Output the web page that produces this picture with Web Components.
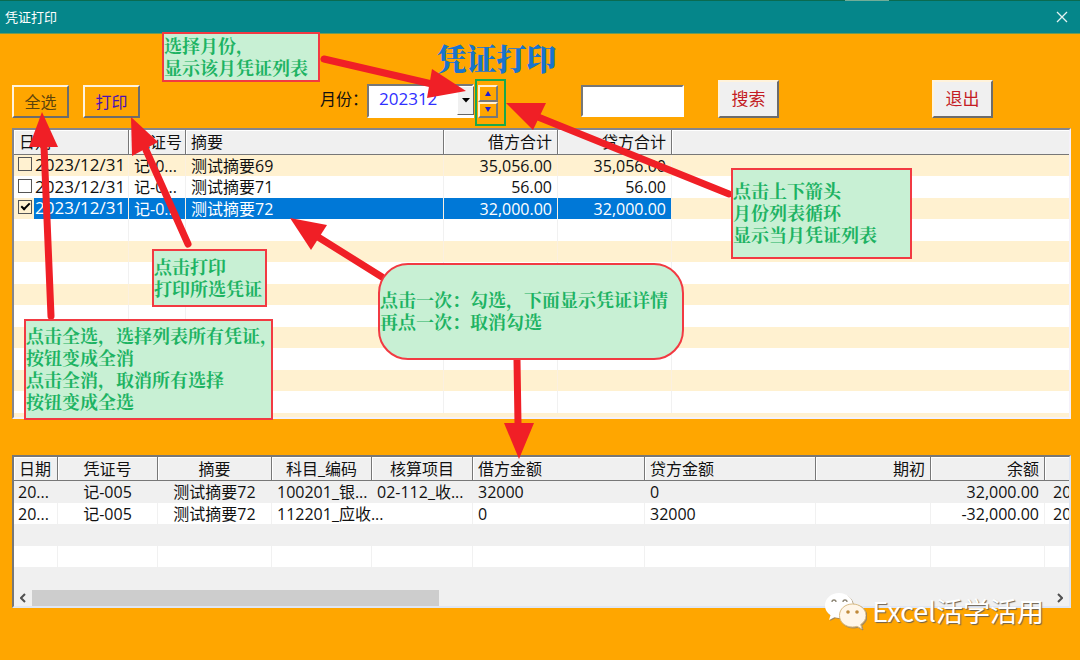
<!DOCTYPE html>
<html lang="zh-CN">
<head>
<meta charset="utf-8">
<title>凭证打印</title>
<style>
  html { min-height: 100%; background: #ffa600; }
  body { margin: 0; font: 16px/20px "Open Sans", "Noto Sans CJK SC", sans-serif; color: #111; }
</style>
</head>
<body>
<voucher-form></voucher-form>
<script>
const make = (host, html) => { host.attachShadow({ mode: "open" }).innerHTML = html; };

/* Window caption with the close button */
customElements.define("title-bar", class extends HTMLElement {
  connectedCallback() {
    make(this, `<style>
      :host { display: flex; align-items: center; justify-content: space-between; box-sizing: border-box; height: 34px;
        padding: 0 10px 0 5px; background: #05868a; border-top: 1px solid #0a6b50; border-bottom: 1px solid #6f9a54;
        color: #fff; font-size: 13px; position: relative; }
      i { position: absolute; top: -1px; right: 191px; width: 44px; height: 1px; background: #72ad98; }
      button { border: 0; padding: 0; background: none; width: 16px; height: 16px; }
      svg { display: block; }
    </style>
    <i></i><slot></slot>
    <button aria-label="关闭"><svg width="16" height="16" viewBox="0 0 16 16"><path d="M3 3L13 13M13 3L3 13" stroke="#e4f2f2" stroke-width="1.3"/></svg></button>`);
  }
});

/* Raised push button */
customElements.define("form-button", class extends HTMLElement {
  connectedCallback() {
    make(this, `<style>
      :host { display: block; flex: none; width: 57px; height: 33px; --face: #ffa600; }
      :host([large]) { width: 61px; height: 38px; --face: #f0f0f0; font-size: 17px; }
      button { display: block; box-sizing: border-box; width: 100%; height: 100%; padding: 0; font: inherit; color: inherit;
        background: var(--face); border: 2px solid; border-color: #fff3dc #6c6c6c #6c6c6c #fff3dc; }
    </style><button><slot></slot></button>`);
  }
});

/* Month drop-down */
customElements.define("month-select", class extends HTMLElement {
  connectedCallback() {
    make(this, `<style>
      :host { display: flex; align-items: flex-end; }
      label { height: 38px; line-height: 38px; width: 47px; white-space: nowrap; }
      .box { display: grid; }
      select, .drop { grid-area: 1 / 1; }
      select { appearance: none; box-sizing: border-box; width: 107px; height: 34px; margin: 0; padding: 0 0 4px 10px; border: 2px solid;
        border-color: #777 #fff #fff #777; border-radius: 0; background: #fff; color: #2f2fff; font: inherit; font-size: 17px; }
      .drop { justify-self: end; display: grid; place-items: center; box-sizing: border-box; width: 17px; height: 29px; margin: 2px 0 0;
        background: #f0f0f0; border: 1px solid; border-color: #fff #666 #666 #fff; pointer-events: none; }
    </style>
    <label for="m">月份：</label>
    <div class="box"><select id="m"><option>202312</option></select>
    <span class="drop"><svg width="8" height="5" viewBox="0 0 8 5"><path d="M0 0H8L4 4.5Z" fill="#000"/></svg></span></div>`);
  }
});

/* Up and down stepper */
customElements.define("month-spin", class extends HTMLElement {
  connectedCallback() {
    make(this, `<style>
      :host { display: grid; grid-template-rows: 1fr 1fr; width: 20px; height: 33px; position: relative; }
      :host::after { content: ""; position: absolute; inset: -6px -8px -8px -3px; border: 2px solid #19a84c; pointer-events: none; }
      button { display: grid; place-items: center; padding: 0; background: #ffa600; border: 2px solid; border-color: #fff0d0 #777 #777 #fff0d0; }
    </style>
    <button aria-label="上一月"><svg width="6" height="5"><path d="M0 5H6L3 0Z" fill="#1c1cd8"/></svg></button>
    <button aria-label="下一月"><svg width="6" height="5"><path d="M0 0H6L3 5Z" fill="#1c1cd8"/></svg></button>`);
  }
});

customElements.define("search-box", class extends HTMLElement {
  connectedCallback() {
    make(this, `<style>
      :host { display: block; width: 103px; height: 33px; }
      input { display: block; box-sizing: border-box; width: 100%; height: 32px; margin: 0; padding: 0 4px; font: inherit;
        border: 2px solid; border-color: #777 #fff #fff #777; background: #fff; border-radius: 0; }
    </style><input type="text" aria-label="搜索内容">`);
  }
});

/* Shared look of the two list views */
const listStyle = `
  :host { display: block; overflow: hidden; border: 2px solid; border-color: #85858c #f4f1fb #f4f1fb #85858c; background: #fff; }
  table { border-collapse: separate; border-spacing: 0; table-layout: fixed; width: 100%; line-height: 20px; }
  th { height: 24px; box-sizing: border-box; padding: 0 5px; font-weight: 400; text-align: left; background: #f0f0f0;
    border-right: 1px solid #777; border-bottom: 1px solid #777; box-shadow: inset 1px 1px #fff; white-space: nowrap; overflow: hidden; }
  th:last-child { border-right: 0; }
  td { box-sizing: border-box; height: 21px; padding: 0 5px; border-right: 1px solid #f1f1f1; white-space: nowrap; overflow: hidden; }
  td:last-child { border-right: 0; }
  tr:nth-child(odd) td { background: var(--stripe); border-right-color: var(--stripe-line, var(--stripe)); }
  .r { text-align: right; } .c { text-align: center; }`;

customElements.define("voucher-list", class extends HTMLElement {
  connectedCallback() {
    const data = [["2023/12/31", "记-0...", "测试摘要69", "35,056.00"], ["2023/12/31", "记-0...", "测试摘要71", "56.00"], ["2023/12/31", "记-0...", "测试摘要72", "32,000.00"]];
    const rows = data.map((d, i) => `<tr${i === 2 ? ' class="sel"' : ""}><td class="first"><label><input type="checkbox"${i === 2 ? " checked" : ""}><span>${d[0]}</span></label></td><td>${d[1]}</td><td>${d[2]}</td><td class="r">${d[3]}</td><td class="r">${d[3]}</td><td></td></tr>`);
    const empty = "<tr><td></td><td></td><td></td><td></td><td></td><td></td></tr>".repeat(9);
    make(this, `<style>${listStyle}
      :host { --stripe: #fff1d0; --stripe-line: #fbf0e0; }
      th { height: 25px; }
      tr:nth-child(even) td { height: 22px; }
      tbody tr:last-child td { height: 4px; }
      td.first { padding: 0; }
      label { display: flex; height: 21px; }
      input { appearance: none; flex: none; box-sizing: border-box; width: 14px; height: 14px; margin: 2px 2px 0 4px; border: 1px solid #555; display: grid; place-items: center; }
      input:checked::after { content: ""; box-sizing: border-box; width: 9px; height: 5px; border: solid #000; border-width: 0 0 2px 2px; transform: rotate(-45deg); margin-bottom: 3px; }
      span { flex: 1; padding-left: 1px; font-size: 17px; }
      tr.sel span, tr.sel td:not(.first):not(:last-child) { background: #0078d7; color: #fff; }
    </style>
    <table><colgroup><col style="width:115px"><col style="width:57px"><col style="width:258px"><col style="width:114px"><col style="width:114px"><col></colgroup>
    <thead><tr><th>日期</th><th class="c">凭证号</th><th>摘要</th><th class="r">借方合计</th><th class="r">贷方合计</th><th></th></tr></thead>
    <tbody>${rows.join("")}${empty}<tr><td colspan="6"></td></tr></tbody></table>`);
  }
});

customElements.define("detail-list", class extends HTMLElement {
  connectedCallback() {
    const widths = [44, 100, 114, 100, 101, 172, 171, 115, 114].map(w => `<col style="width:${w}px">`).join("") + "<col>";
    const empty = ("<tr>" + "<td></td>".repeat(10) + "</tr>").repeat(3);
    make(this, `<style>${listStyle}
      :host { --stripe: #f0f0f0; border-color: #777 #dfe6f4 #dfe6f4 #777; }
      tbody tr:nth-child(odd) td { height: 22px; }
      td:first-child { padding: 0 4px; }
      td:last-child { padding-left: 8px; text-overflow: clip; }
      .bar { display: flex; align-items: center; height: 17px; background: #f0f0f0; }
      .bar button { flex: none; width: 18px; height: 17px; padding: 0; border: 0; background: none; display: grid; place-items: center; }
      .track { flex: 1; height: 16px; margin-right: 2px; }
      .thumb { width: 40%; height: 16px; background: #cdcdcd; }
    </style>
    <table><colgroup>${widths}</colgroup>
    <thead><tr><th>日期</th><th class="c">凭证号</th><th class="c">摘要</th><th class="c">科目_编码</th><th class="c">核算项目</th><th>借方金额</th><th>贷方金额</th><th class="r">期初</th><th class="r">余额</th><th></th></tr></thead>
    <tbody>
      <tr><td>20...</td><td class="c">记-005</td><td class="c">测试摘要72</td><td>100201_银...</td><td>02-112_收...</td><td>32000</td><td>0</td><td></td><td class="r">32,000.00</td><td>20</td></tr>
      <tr><td>20...</td><td class="c">记-005</td><td class="c">测试摘要72</td><td colspan="2">112201_应收...</td><td>0</td><td>32000</td><td></td><td class="r">-32,000.00</td><td>20</td></tr>
      ${empty}
    </tbody></table>
    <div class="bar">
      <button aria-label="向左滚动"><svg width="6" height="10"><path d="M5 1L1 5L5 9" fill="none" stroke="#505050" stroke-width="2"/></svg></button>
      <div class="track"><div class="thumb"></div></div>
      <button aria-label="向右滚动"><svg width="6" height="10"><path d="M1 1L5 5L1 9" fill="none" stroke="#505050" stroke-width="2"/></svg></button>
    </div>`);
  }
});

/* Callout box; its place on the overlay comes from the overlay's stylesheet */
customElements.define("note-box", class extends HTMLElement {
  connectedCallback() {
    make(this, `<style>
      :host { display: flex; align-items: center; box-sizing: border-box; padding-bottom: 3px; border: 2px solid #f23a42; background: #c8f0d4;
        color: #1db363; font: 700 18px/22px "Noto Serif CJK SC", "Noto Sans CJK SC", serif; white-space: nowrap; }
      :host([round]) { border-radius: 30px; }
    </style><div><slot></slot></div>`);
  }
});

/* Free canvas of callouts and arrows laid over the form */
customElements.define("note-layer", class extends HTMLElement {
  connectedCallback() {
    make(this, `<style>
      :host { position: absolute; inset: 0; overflow: hidden; pointer-events: none; }
      svg { position: absolute; inset: 0; width: 100%; height: 100%; }
      note-box { position: absolute; }
      .month { left: 162px; top: 32px; width: 158px; height: 50px; }
      .spin { left: 731px; top: 168px; width: 181px; height: 91px; }
      .print { left: 152px; top: 249px; width: 115px; height: 58px; }
      .all { left: 24px; top: 319px; width: 249px; height: 101px; }
      .pick { left: 378px; top: 263px; width: 306px; height: 97px; }
    </style>
    <svg><g stroke="#f01f26" stroke-width="7" stroke-linecap="round">
      <path d="M324 59L432 84M188 244L146 150M51 316L44 146M729 194L538 117M382 277L318 237M517 360L518 424"/></g>
      <g fill="#f01f26"><path d="M466 91L432 69L427 98Z"/><path d="M131 117L158 142L132 156Z"/><path d="M42 112L58 147L29 147Z"/>
      <path d="M506 103L546 103L533 130Z"/><path d="M290 218L327 225L311 250Z"/><path d="M519 459L504 423L534 423Z"/></g></svg>
    <note-box class="month">选择月份，<br>显示该月凭证列表</note-box>
    <note-box class="spin">点击上下箭头<br>月份列表循环<br>显示当月凭证列表</note-box>
    <note-box class="print">点击打印<br>打印所选凭证</note-box>
    <note-box class="all">点击全选，选择列表所有凭证，<br>按钮变成全消<br>点击全消，取消所有选择<br>按钮变成全选</note-box>
    <note-box class="pick" round>点击一次：勾选，下面显示凭证详情<br>再点一次：取消勾选</note-box>`);
  }
});

customElements.define("account-mark", class extends HTMLElement {
  connectedCallback() {
    make(this, `<style>
      :host { position: absolute; right: 36px; top: 590px; display: flex; align-items: center; gap: 6px; height: 42px;
        color: #fff; font: 27px/42px "Noto Sans CJK SC", sans-serif; text-shadow: 1px 1px 1px #6b6050; white-space: nowrap; }
      svg { filter: drop-shadow(1px 1px 0 #a08860); }
    </style>
    <svg width="42" height="40" viewBox="0 0 42 40">
      <path d="M15 2C7 2 1 7.500 1 14.500C1 18.500 3 22 6.500 24.300L5 29L10.500 26.300C12 26.700 13.500 27 15 27C23 27 29 21.500 29 14.500S23 2 15 2Z" fill="#fff"/>
      <path d="M28.500 13C21 13 15.500 18 15.500 24.500S21 36 28.500 36C30 36 31.500 35.800 33 35.300L38 38L36.700 33.500C40 31.300 42 28.200 42 24.500C42 18 36 13 28.500 13Z" fill="#fff6e8" stroke="#d8bb84" stroke-width="1"/>
      <g fill="none" stroke="#8c8574" stroke-width="1.300"><path d="M8 11A2 2 0 0 1 12 11M19 11A2 2 0 0 1 23 11"/></g>
      <g fill="#c08a3a"><circle cx="24" cy="21" r="1.800"/><circle cx="33" cy="21" r="1.800"/></g>
    </svg><slot></slot>`);
  }
});

customElements.define("voucher-form", class extends HTMLElement {
  connectedCallback() {
    make(this, `<style>
      :host { display: block; position: relative; min-height: 100vh; background: #ffa600; }
      main { padding: 0 9px 0 12px; }
      h1 { margin: 0; height: 46px; padding-right: 90px; font: 900 30px/46px "Noto Serif CJK SC", "Noto Sans CJK SC", serif; color: #1874cd; text-align: center; }
      .tools { display: flex; align-items: flex-end; }
      .print { margin-left: 14px; color: #4b10b4; } .all { color: #5c430c; }
      month-select { margin-left: 180px; } month-spin { margin-left: 4px; }
      search-box { margin-left: 83px; } .find { margin-left: 34px; } .quit { margin: 0 78px 0 auto; }
      .find, .quit { color: #c41c24; }
      voucher-list { margin-top: 10px; } detail-list { margin-top: 36px; }
    </style>
    <title-bar>凭证打印</title-bar>
    <main>
      <h1>凭证打印</h1>
      <div class="tools">
        <form-button class="all">全选</form-button><form-button class="print">打印</form-button>
        <month-select></month-select><month-spin></month-spin><search-box></search-box>
        <form-button class="find" large>搜索</form-button><form-button class="quit" large>退出</form-button>
      </div>
      <voucher-list></voucher-list>
      <detail-list></detail-list>
    </main>
    <note-layer></note-layer>
    <account-mark>Excel活学活用</account-mark>`);
  }
});
</script>
</body>
</html>
